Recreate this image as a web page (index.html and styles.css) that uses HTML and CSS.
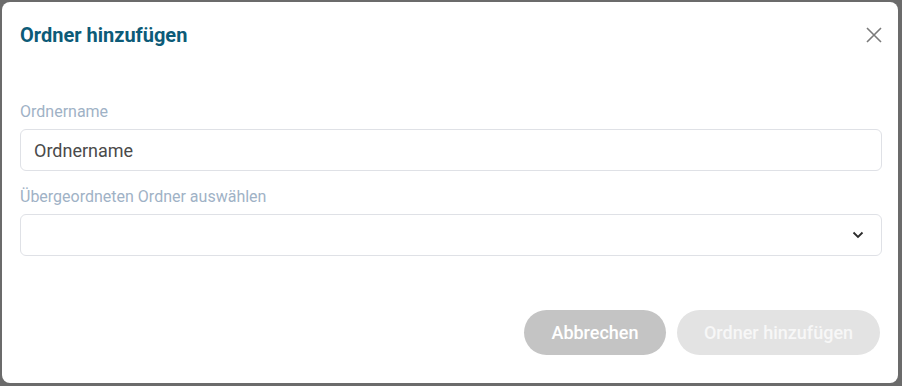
FILE: index.html
```html
<!DOCTYPE html>
<html lang="de">
<head>
    <meta charset="UTF-8">
    <meta name="viewport" content="width=device-width, initial-scale=1.0">
    <title>Ordner hinzufügen</title>
    <link rel="stylesheet" href="styles.css">
</head>
<body>
    <div class="modal">
        <div class="modal_header">
            <h2 class="modal_title">Ordner hinzufügen</h2>
            <button class="modal_close" aria-label="Schließen">
                <svg width="16" height="16" viewBox="0 0 16 16">
                    <path d="M1 1L15 15M15 1L1 15" stroke="#7a7a7a" stroke-width="1.6" fill="none"/>
                </svg>
            </button>
        </div>
        <div class="modal_body">
            <div class="field">
                <label for="name">Ordnername</label>
                <input id="name" type="text" placeholder="Ordnername">
            </div>
            <div class="field">
                <label>Übergeordneten Ordner auswählen</label>
                <div class="select">
                    <svg width="12" height="8" viewBox="0 0 12 8">
                        <path d="M1.5 1.5L6 6L10.5 1.5" stroke="#2b2b2b" stroke-width="1.8" fill="none"/>
                    </svg>
                </div>
            </div>
        </div>
        <div class="modal_footer">
            <button class="btn btn_cancel">Abbrechen</button>
            <button class="btn btn_submit" disabled>Ordner hinzufügen</button>
        </div>
    </div>
</body>
</html>
```

FILE: styles.css
```css
body, html {
    margin: 0;
    padding: 0;
    height: 100%;
    background-color: #6b6b6b;
    font-family: Roboto, 'Liberation Sans', Arial, sans-serif;
}

body {
    padding: 2px 4px 3px 2px;
    box-sizing: border-box;
}

.modal {
    height: 100%;
    background-color: #ffffff;
    border-radius: 8px;
    display: flex;
    flex-direction: column;
}

.modal_header {
    display: flex;
    justify-content: space-between;
    align-items: center;
    padding: 21px 16px 0 18px;
    height: 24px;
}

.modal_title {
    margin: 0;
    font-size: 20px;
    line-height: 24px;
    font-weight: 700;
    color: #0d5b78;
}

.modal_close {
    border: none;
    background: none;
    padding: 0;
    width: 16px;
    height: 16px;
    cursor: pointer;
}

.modal_body {
    padding: 56px 16px 0 18px;
    display: flex;
    flex-direction: column;
    gap: 17px;
}

.field {
    display: flex;
    flex-direction: column;
    gap: 8px;
}

.field label {
    font-size: 16px;
    color: #9fb2c6;
    line-height: 18px;
}

.field input, .select {
    height: 42px;
    box-sizing: border-box;
    border: 1px solid #dfe1e6;
    border-radius: 6px;
}

.field input {
    padding: 0 13px;
    font-family: inherit;
    font-size: 18px;
    color: #4a4a4a;
}

.field input::placeholder {
    color: #4a4a4a;
}

.select {
    display: flex;
    justify-content: flex-end;
    align-items: center;
    padding-right: 17px;
}

.modal_footer {
    margin-top: auto;
    display: flex;
    justify-content: flex-end;
    gap: 11px;
    padding: 0 18px 28px;
}

.btn {
    height: 45px;
    border: none;
    border-radius: 23px;
    font-family: inherit;
    font-size: 18px;
    font-weight: 500;
    color: #ffffff;
    cursor: pointer;
}

.btn_cancel {
    width: 142px;
    background-color: #c4c4c4;
}

.btn_submit {
    width: 203px;
    background-color: #e3e3e3;
    color: #f7f7f7;
}
```
